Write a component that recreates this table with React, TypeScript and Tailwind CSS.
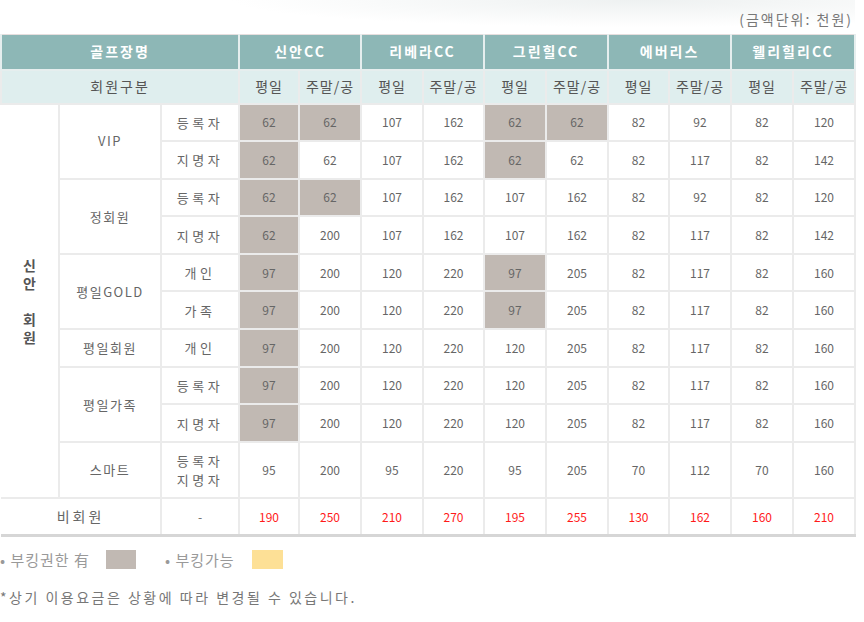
import React from 'react';

type Cell = { v: number; g?: boolean };

const courses = ['신안CC', '리베라CC', '그린힐CC', '에버리스', '웰리힐리CC'];

// g = 부킹권한 cell (gray)
const rows: { group?: string; span?: number; sub: React.ReactNode; cells: Cell[]; tall?: boolean }[] = [
  { group: 'VIP', span: 2, sub: '등록자', cells: [{ v: 62, g: true }, { v: 62, g: true }, { v: 107 }, { v: 162 }, { v: 62, g: true }, { v: 62, g: true }, { v: 82 }, { v: 92 }, { v: 82 }, { v: 120 }] },
  { sub: '지명자', cells: [{ v: 62, g: true }, { v: 62 }, { v: 107 }, { v: 162 }, { v: 62, g: true }, { v: 62 }, { v: 82 }, { v: 117 }, { v: 82 }, { v: 142 }] },
  { group: '정회원', span: 2, sub: '등록자', cells: [{ v: 62, g: true }, { v: 62, g: true }, { v: 107 }, { v: 162 }, { v: 107 }, { v: 162 }, { v: 82 }, { v: 92 }, { v: 82 }, { v: 120 }] },
  { sub: '지명자', cells: [{ v: 62, g: true }, { v: 200 }, { v: 107 }, { v: 162 }, { v: 107 }, { v: 162 }, { v: 82 }, { v: 117 }, { v: 82 }, { v: 142 }] },
  { group: '평일GOLD', span: 2, sub: '개인', cells: [{ v: 97, g: true }, { v: 200 }, { v: 120 }, { v: 220 }, { v: 97, g: true }, { v: 205 }, { v: 82 }, { v: 117 }, { v: 82 }, { v: 160 }] },
  { sub: '가족', cells: [{ v: 97, g: true }, { v: 200 }, { v: 120 }, { v: 220 }, { v: 97, g: true }, { v: 205 }, { v: 82 }, { v: 117 }, { v: 82 }, { v: 160 }] },
  { group: '평일회원', span: 1, sub: '개인', cells: [{ v: 97, g: true }, { v: 200 }, { v: 120 }, { v: 220 }, { v: 120 }, { v: 205 }, { v: 82 }, { v: 117 }, { v: 82 }, { v: 160 }] },
  { group: '평일가족', span: 2, sub: '등록자', cells: [{ v: 97, g: true }, { v: 200 }, { v: 120 }, { v: 220 }, { v: 120 }, { v: 205 }, { v: 82 }, { v: 117 }, { v: 82 }, { v: 160 }] },
  { sub: '지명자', cells: [{ v: 97, g: true }, { v: 200 }, { v: 120 }, { v: 220 }, { v: 120 }, { v: 205 }, { v: 82 }, { v: 117 }, { v: 82 }, { v: 160 }] },
  { group: '스마트', span: 1, tall: true, sub: (<>등록자<br />지명자</>), cells: [{ v: 95 }, { v: 200 }, { v: 95 }, { v: 220 }, { v: 95 }, { v: 205 }, { v: 70 }, { v: 112 }, { v: 70 }, { v: 160 }] },
];

const guest = [190, 250, 210, 270, 195, 255, 130, 162, 160, 210];

const td = 'border-2 border-[#ebebeb] text-center align-middle p-0';

export default function App() {
  return (
    <div className="w-[864px] h-[622px] bg-white font-['Noto_Sans_CJK_KR','Liberation_Sans',sans-serif] text-[#666]">
      <div className="h-[34px] w-[855px] flex items-end justify-end pb-[8px] pr-[2px] bg-[radial-gradient(ellipse_60%_100%_at_75%_0%,#eef1f1,#ffffff_80%)]">
        <span className="text-[14px] leading-none tracking-[2px] text-[#777]">(금액단위: 천원)</span>
      </div>

      <table className="w-[854px] table-fixed border-collapse border-t border-t-[#e6dede] border-b-[3px] border-b-[#d6d6d6]">
        <colgroup>
          <col className="w-[58px]" />
          <col className="w-[102px]" />
          <col className="w-[78px]" />
          <col className="w-[60px]" />
          <col className="w-[62px]" />
          <col className="w-[62px]" />
          <col className="w-[61px]" />
          <col className="w-[62px]" />
          <col className="w-[62px]" />
          <col className="w-[61px]" />
          <col className="w-[62px]" />
          <col className="w-[62px]" />
          <col className="w-[62px]" />
        </colgroup>
        <thead>
          <tr className="h-[35px] bg-[#8db7b6] text-white text-[14px] font-bold tracking-[2px]">
            <th colSpan={3} className="border-2 border-[#e6eeee] border-t-0 font-bold">골프장명</th>
            {courses.map((c) => (
              <th key={c} colSpan={2} className="border-2 border-[#e6eeee] border-t-0 font-bold">{c}</th>
            ))}
          </tr>
          <tr className="h-[34px] bg-[#dfeeee] text-[14px] text-[#555] tracking-[1px]">
            <th colSpan={3} className="border-2 border-[#ebebeb] font-normal tracking-[2px]">회원구분</th>
            {courses.map((c) => (
              <React.Fragment key={c}>
                <th className="border-2 border-[#ebebeb] font-normal">평일</th>
                <th className="border-2 border-[#ebebeb] font-normal whitespace-nowrap">주말/공</th>
              </React.Fragment>
            ))}
          </tr>
        </thead>
        <tbody className="text-[12px]">
          {rows.map((r, i) => (
            <tr key={i} className={r.tall ? 'h-[56px]' : 'h-[37.6px]'}>
              {i === 0 && (
                <td rowSpan={10} className={`${td} border-l-0 text-[14px] font-bold text-[#555] leading-[18px]`}>
                  신<br />안<br /><br />회<br />원
                </td>
              )}
              {r.group && (
                <td rowSpan={r.span} className={`${td} text-[13px] tracking-[1.5px]`}>{r.group}</td>
              )}
              <td className={`${td} text-[13px] tracking-[3.5px] leading-[19px]`}>{r.sub}</td>
              {r.cells.map((c, j) => (
                <td key={j} className={`${td} ${c.g ? 'bg-[#c1b9b3]' : ''}`}>{c.v}</td>
              ))}
            </tr>
          ))}
          <tr className="h-[38px]">
            <td colSpan={2} className={`${td} border-l-0 text-[14px] tracking-[3px]`}>비회원</td>
            <td className={td}>-</td>
            {guest.map((v, j) => (
              <td key={j} className={`${td} text-[#ff1a1a]`}>{v}</td>
            ))}
          </tr>
        </tbody>
      </table>

      <div className="flex items-center h-[19px] mt-[13px] text-[15px] text-[#999] tracking-[1px]">
        <span className="w-[100px] whitespace-nowrap">• 부킹권한 有</span>
        <span className="ml-[6px] w-[30px] h-[19px] bg-[#c1b9b3]" />
        <span className="ml-[29px] w-[82px] whitespace-nowrap">• 부킹가능</span>
        <span className="ml-[5px] w-[31px] h-[19px] bg-[#fde096]" />
      </div>

      <p className="mt-[18px] text-[14px] tracking-[2.5px] text-[#777]">*상기 이용요금은 상황에 따라 변경될 수 있습니다.</p>
    </div>
  );
}
